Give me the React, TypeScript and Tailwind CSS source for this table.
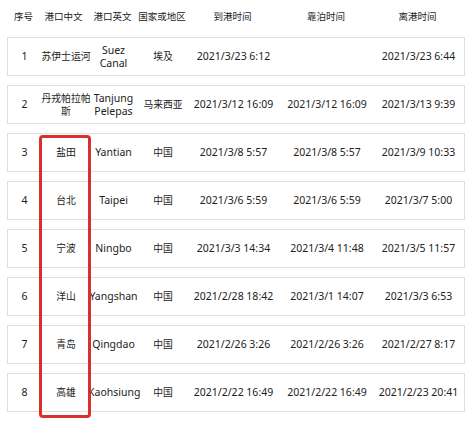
import React from "react";

const rows: string[][] = [
  ["1", "苏伊士运河", "Suez Canal", "埃及", "2021/3/23 6:12", "", "2021/3/23 6:44"],
  ["2", "丹戎帕拉帕斯", "Tanjung Pelepas", "马来西亚", "2021/3/12 16:09", "2021/3/12 16:09", "2021/3/13 9:39"],
  ["3", "盐田", "Yantian", "中国", "2021/3/8 5:57", "2021/3/8 5:57", "2021/3/9 10:33"],
  ["4", "台北", "Taipei", "中国", "2021/3/6 5:59", "2021/3/6 5:59", "2021/3/7 5:00"],
  ["5", "宁波", "Ningbo", "中国", "2021/3/3 14:34", "2021/3/4 11:48", "2021/3/5 11:57"],
  ["6", "洋山", "Yangshan", "中国", "2021/2/28 18:42", "2021/3/1 14:07", "2021/3/3 6:53"],
  ["7", "青岛", "Qingdao", "中国", "2021/2/26 3:26", "2021/2/26 3:26", "2021/2/27 8:17"],
  ["8", "高雄", "Kaohsiung", "中国", "2021/2/22 16:49", "2021/2/22 16:49", "2021/2/23 20:41"],
];

const headers = ["序号", "港口中文", "港口英文", "国家或地区", "到港时间", "靠泊时间", "离港时间"];

const grid = "grid grid-cols-[33px_47px_51px_48px_93px_94px_89px] items-center text-center";

export default function App() {
  return (
    <div
      className="relative w-[472px] h-[425px] bg-white text-[#222] text-[10.5px] leading-[13px] px-[7px]"
      style={{ fontFamily: '"Noto Sans", "Noto Sans CJK SC", sans-serif' }}
    >
      <div className={`${grid} h-[37px] pb-[4px] text-[9.5px]`}>
        {headers.map((h) => (
          <div key={h} className="whitespace-nowrap">{h}</div>
        ))}
      </div>
      <div className="flex flex-col gap-[9px]">
        {rows.map((r) => (
          <div key={r[0]} className={`${grid} h-[39px] border border-[#dedede] bg-white`}>
            <div>{r[0]}</div>
            <div className="-mr-[3px] text-[9.8px] break-all">{r[1]}</div>
            <div>{r[2]}</div>
            <div className="whitespace-nowrap text-[9.8px]">{r[3]}</div>
            <div className="whitespace-nowrap">{r[4]}</div>
            <div className="whitespace-nowrap">{r[5]}</div>
            <div className="whitespace-nowrap">{r[6]}</div>
          </div>
        ))}
      </div>
      <div className="absolute left-[39px] top-[135px] w-[52px] h-[283px] border-[3px] border-[#d8302c] rounded-[4px]" />
    </div>
  );
}
